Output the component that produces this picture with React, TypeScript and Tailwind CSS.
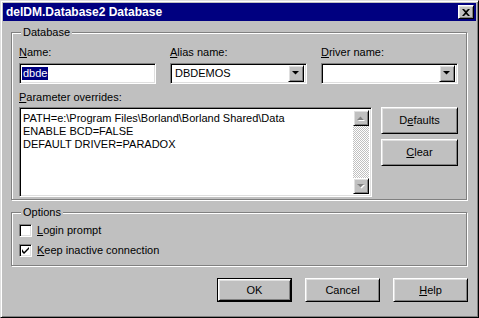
import React from "react";

const font = { fontFamily: '"Liberation Sans", Arial, sans-serif' };

function U({ children }: { children: React.ReactNode }) {
  return <span className="underline underline-offset-[1px]">{children}</span>;
}

function Sunken({ className = "", children }: { className?: string; children?: React.ReactNode }) {
  return (
    <div
      className={
        "border border-t-[#808080] border-l-[#808080] border-r-white border-b-white shadow-[inset_1px_1px_0_#000,inset_-1px_-1px_0_#dfdfdf] " +
        className
      }
    >
      {children}
    </div>
  );
}

function Raised({ className = "", children }: { className?: string; children?: React.ReactNode }) {
  return (
    <div
      className={
        "border border-t-white border-l-white border-r-black border-b-black shadow-[inset_1px_1px_0_#dfdfdf,inset_-1px_-1px_0_#808080] bg-[#c0c0c0] " +
        className
      }
    >
      {children}
    </div>
  );
}

function Arrow({ up = false, gray = false }: { up?: boolean; gray?: boolean }) {
  const pts = up ? "0,4 7,4 3.5,0.5" : "0,0 7,0 3.5,3.5";
  return (
    <svg width="8" height="5" viewBox="0 0 8 5">
      {gray && <polygon points={pts} fill="#fff" transform="translate(1,1)" />}
      <polygon points={pts} fill={gray ? "#808080" : "#000"} />
    </svg>
  );
}

function Combo({ value }: { value: string }) {
  return (
    <Sunken className="h-[21px] w-[137px] bg-white flex items-center p-[2px]">
      <div className="flex-1 pl-[2px] text-[11px] leading-none">{value}</div>
      <Raised className="w-[16px] h-[17px] flex items-center justify-center">
        <Arrow />
      </Raised>
    </Sunken>
  );
}

function GroupBox({
  title,
  className = "",
  children,
}: {
  title: string;
  className?: string;
  children?: React.ReactNode;
}) {
  return (
    <div
      className={
        "relative border border-[#808080] shadow-[inset_1px_1px_0_#fff,1px_1px_0_#fff] " + className
      }
    >
      <span className="absolute left-[9px] top-[-7px] bg-[#c0c0c0] px-[2px] text-[11px] leading-[13px]">
        {title}
      </span>
      {children}
    </div>
  );
}

function Button({
  children,
  w = 75,
  isDefault = false,
}: {
  children: React.ReactNode;
  w?: number;
  isDefault?: boolean;
}) {
  return (
    <div
      className={"h-full flex " + (isDefault ? "border border-black" : "")}
      style={{ width: w }}
    >
      <Raised className="flex-1 h-full flex items-center justify-center text-[11px]">{children}</Raised>
    </div>
  );
}

function Checkbox({ checked, label }: { checked: boolean; label: React.ReactNode }) {
  return (
    <div className="flex items-center gap-[5px] h-[13px]">
      <Sunken className="w-[13px] h-[13px] bg-white flex items-center justify-center">
        {checked && (
          <svg width="7" height="7" viewBox="0 0 7 7">
            <path d="M0 2v3l2 2l5-5v-2l-5 5z" fill="#000" />
          </svg>
        )}
      </Sunken>
      <span className="text-[11px] leading-none">{label}</span>
    </div>
  );
}

export default function App() {
  return (
    <div
      style={font}
      className="w-[479px] h-[318px] bg-[#c0c0c0] text-black flex flex-col border border-t-[#dfdfdf] border-l-[#dfdfdf] border-r-black border-b-black shadow-[inset_1px_1px_0_#fff,inset_-1px_-1px_0_#808080] p-[2px]"
    >
      {/* title bar */}
      <div className="h-[18px] bg-[#000080] flex items-center justify-between pl-[3px] pr-[2px]">
        <span className="text-white font-bold text-[12px] leading-none">delDM.Database2 Database</span>
        <Raised className="w-[16px] h-[14px] flex items-center justify-center">
          <svg width="8" height="7" viewBox="0 0 8 7">
            <path d="M0 0h2l2 2l2-2h2l-3 3.5l3 3.5h-2l-2-2l-2 2h-2l3-3.5z" fill="#000" />
          </svg>
        </Raised>
      </div>

      {/* Database group */}
      <GroupBox title="Database" className="ml-[8px] mt-[11px] w-[456px] h-[168px] pl-[7px] pr-[8px] pt-[13px]">
        <div className="flex gap-[14px]">
          <div className="flex flex-col gap-[4px]">
            <span className="text-[11px] leading-[13px]">
              <U>N</U>ame:
            </span>
            <Sunken className="h-[21px] w-[137px] bg-white flex items-center px-[2px]">
              <span className="bg-[#000080] text-white text-[11px] leading-[13px] px-[1px]">dbde</span>
            </Sunken>
          </div>
          <div className="flex flex-col gap-[4px]">
            <span className="text-[11px] leading-[13px]">
              <U>A</U>lias name:
            </span>
            <Combo value="DBDEMOS" />
          </div>
          <div className="flex flex-col gap-[4px]">
            <span className="text-[11px] leading-[13px]">
              <U>D</U>river name:
            </span>
            <Combo value="" />
          </div>
        </div>
        <div className="mt-[7px] text-[11px] leading-[13px]">
          <U>P</U>arameter overrides:
        </div>
        <div className="mt-[3px] flex gap-[9px]">
          <Sunken className="w-[354px] h-[90px] bg-white flex p-[2px]">
            <div className="flex-1 pl-[1px] pt-[2px] text-[11px] leading-[13px] whitespace-pre">
              {"PATH=e:\\Program Files\\Borland\\Borland Shared\\Data\nENABLE BCD=FALSE\nDEFAULT DRIVER=PARADOX"}
            </div>
            <div className="w-[16px] flex flex-col">
              <Raised className="h-[16px] flex items-center justify-center">
                <Arrow up gray />
              </Raised>
              <div className="flex-1 bg-[repeating-conic-gradient(#c0c0c0_0_25%,#fff_0_50%)] bg-[length:2px_2px]" />
              <Raised className="h-[16px] flex items-center justify-center">
                <Arrow gray />
              </Raised>
            </div>
          </Sunken>
          <div className="flex flex-col gap-[5px]">
            <div className="h-[27px]">
              <Button w={77}>
                D<U>e</U>faults
              </Button>
            </div>
            <div className="h-[27px]">
              <Button w={77}>
                <U>C</U>lear
              </Button>
            </div>
          </div>
        </div>
      </GroupBox>

      {/* Options group */}
      <GroupBox title="Options" className="ml-[8px] mt-[12px] w-[456px] h-[54px] pl-[7px] pt-[11px] flex flex-col gap-[7px]">
        <Checkbox checked={false} label={<><U>L</U>ogin prompt</>} />
        <Checkbox checked label={<><U>K</U>eep inactive connection</>} />
      </GroupBox>

      {/* Buttons */}
      <div className="mt-[12px] h-[24px] flex justify-end gap-[13px] pr-[8px]">
        <Button isDefault>OK</Button>
        <Button>Cancel</Button>
        <Button>
          <U>H</U>elp
        </Button>
      </div>
    </div>
  );
}
